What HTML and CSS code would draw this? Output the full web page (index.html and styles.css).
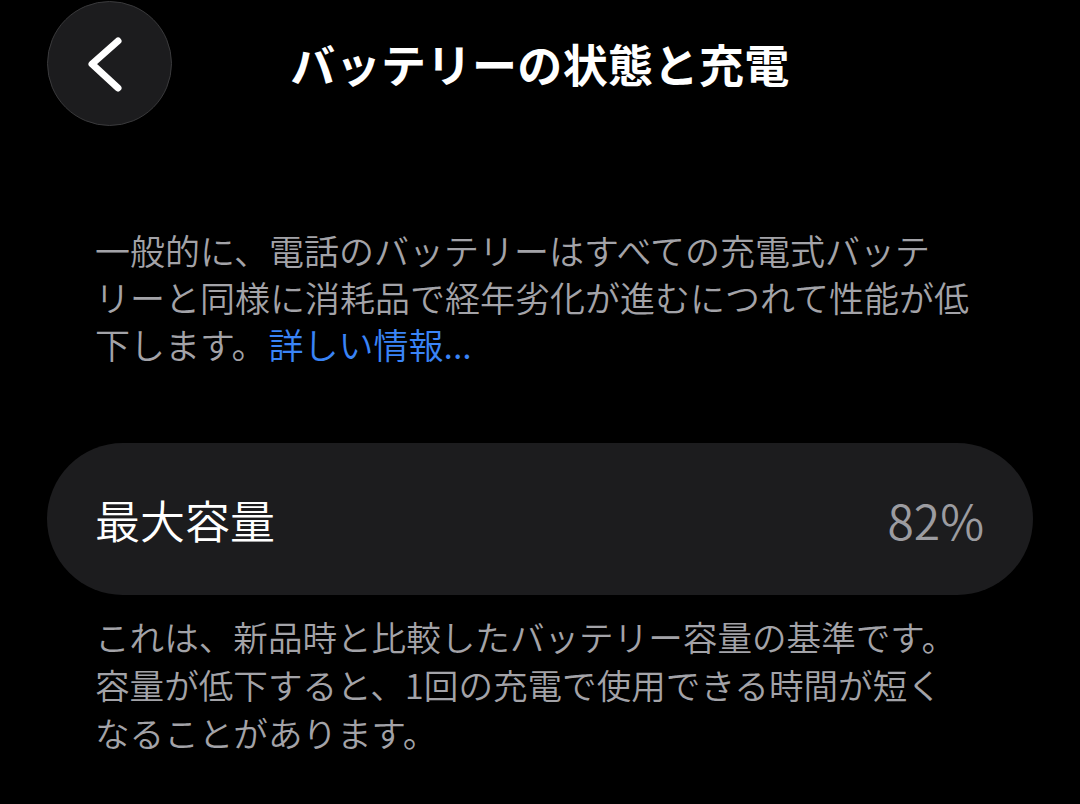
FILE: index.html
```html
<!DOCTYPE html>
<html lang="ja">
<head>
<meta charset="utf-8">
<link rel="stylesheet" href="styles.css">
</head>
<body>
<header class="nav">
  <div class="nav-left">
    <button class="back" aria-label="戻る">
      <svg width="125" height="125" viewBox="0 0 125 125">
        <path d="M71 40 L45 63 L71 87" fill="none" stroke="#ffffff" stroke-width="7" stroke-linecap="round" stroke-linejoin="round"/>
      </svg>
    </button>
  </div>
  <h1 class="title">バッテリーの状態と充電</h1>
  <div class="nav-right"></div>
</header>
<main class="content">
  <p class="desc">一般的に、電話のバッテリーはすべての充電式バッテ<br>リーと同様に消耗品で経年劣化が進むにつれて性能が低<br>下します。<a class="link" href="#">詳しい情報...</a></p>
  <div class="card">
    <span class="card-label">最大容量</span>
    <span class="card-value">82%</span>
  </div>
  <p class="note">これは、新品時と比較したバッテリー容量の基準です。<br>容量が低下すると、1回の充電で使用できる時間が短く<br>なることがあります。</p>
</main>
</body>
</html>
```
FILE: styles.css
```css
html, body {
  margin: 0;
  padding: 0;
  background: #000000;
}
body {
  width: 1080px;
  height: 804px;
  overflow: hidden;
  font-family: "Noto Sans CJK JP", "Noto Sans", sans-serif;
  color: #ffffff;
}
.nav {
  display: grid;
  grid-template-columns: 1fr auto 1fr;
  align-items: center;
  height: 127px;
}
.nav-left {
  padding-left: 47px;
  display: flex;
  align-items: center;
}
.back {
  width: 125px;
  height: 125px;
  border-radius: 50%;
  background: #1c1c1e;
  border: 1.5px solid #3a3a3c;
  padding: 0;
  margin: 0;
  display: flex;
  align-items: center;
  justify-content: center;
  box-sizing: border-box;
}
.back svg {
  display: block;
  flex: none;
}
.title {
  margin: 0;
  font-size: 45px;
  font-weight: 700;
  line-height: 1;
  letter-spacing: 0.4px;
  color: #ffffff;
}
.content {
  padding: 0 47px;
}
.desc {
  margin: 99px 0 0;
  padding-left: 48px;
  font-size: 35px;
  font-weight: 350;
  line-height: 47px;
  color: #a3a3a8;
  white-space: nowrap;
}
.link {
  margin-left: 2px;
  color: #3a84f7;
  text-decoration: none;
}
.card {
  margin-top: 76px;
  height: 152px;
  border-radius: 76px;
  background: #1c1c1e;
  display: flex;
  align-items: center;
  justify-content: space-between;
  padding: 0 49px 0 48px;
}
.card-label {
  font-size: 45px;
  font-weight: 350;
  color: #ffffff;
}
.card-value {
  font-size: 48px;
  font-weight: 350;
  color: #9c9ca1;
}
.note {
  margin: 17px 0 0;
  padding-left: 48px;
  font-size: 34.6px;
  font-weight: 350;
  line-height: 48px;
  color: #a3a3a8;
  white-space: nowrap;
}
```
